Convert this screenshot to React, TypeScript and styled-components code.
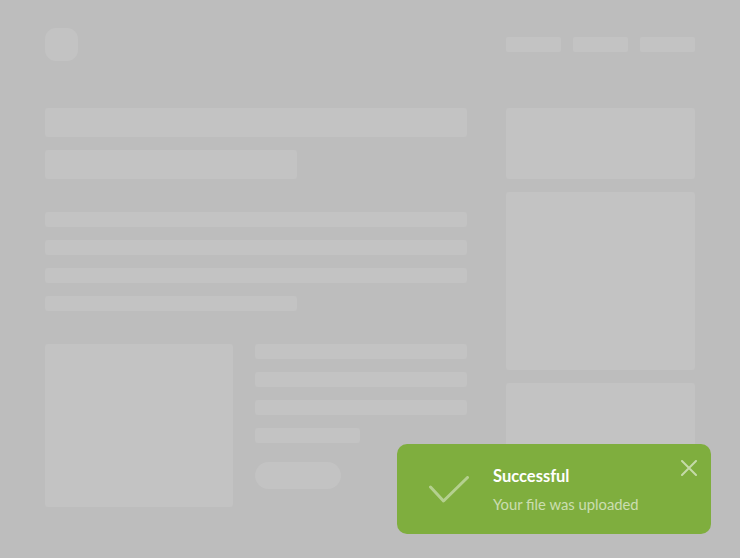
import React from "react";
import styled, { createGlobalStyle } from "styled-components";

const Global = createGlobalStyle`
  html, body { margin: 0; padding: 0; background: #bdbdbd; }
  body { font-family: Lato, "Open Sans", sans-serif; }
`;

const Page = styled.div`
  position: relative;
  width: 740px;
  height: 558px;
  box-sizing: border-box;
  padding: 27px 45px 0 45px;
  background: #bdbdbd;
  overflow: hidden;
`;

const Header = styled.header`
  display: flex;
  align-items: center;
  justify-content: space-between;
  height: 34px;
`;

const Logo = styled.div`
  width: 33px;
  height: 33px;
  border-radius: 11px;
  background: #c3c3c3;
`;

const Nav = styled.nav`
  display: flex;
  gap: 12px;
`;

const NavItem = styled.div`
  width: 55px;
  height: 15px;
  border-radius: 2px;
  background: #c3c3c3;
`;

const Body = styled.div`
  display: grid;
  grid-template-columns: 422px 189px;
  column-gap: 39px;
  margin-top: 47px;
`;

const Main = styled.div`
  display: flex;
  flex-direction: column;
`;

const Block = styled.div<{ $w?: number; $h: number; $mb?: number; $r?: number }>`
  width: ${(p) => (p.$w ? `${p.$w}px` : "100%")};
  height: ${(p) => p.$h}px;
  margin-bottom: ${(p) => p.$mb ?? 0}px;
  border-radius: ${(p) => p.$r ?? 3}px;
  background: #c3c3c3;
  flex-shrink: 0;
`;

const Lines = styled.div`
  display: flex;
  flex-direction: column;
  gap: 13px;
`;

const Bottom = styled.div`
  display: flex;
  gap: 22px;
  margin-top: 33px;
`;

const BottomText = styled.div`
  flex: 1;
  display: flex;
  flex-direction: column;
`;

const Side = styled.aside`
  display: flex;
  flex-direction: column;
  gap: 13px;
`;

const Toast = styled.div`
  position: absolute;
  left: 397px;
  top: 444px;
  width: 314px;
  height: 90px;
  box-sizing: border-box;
  padding-left: 32px;
  border-radius: 10px;
  background: #7fae3e;
  display: flex;
  align-items: center;
  gap: 24px;
`;

const CheckIcon = styled.svg`
  width: 40px;
  height: 28px;
  flex-shrink: 0;
  margin-top: 2px;
`;

const ToastText = styled.div`
  display: flex;
  flex-direction: column;
  gap: 8px;
  margin-top: 2px;
`;

const ToastTitle = styled.div`
  font-family: Lato, "Open Sans", sans-serif;
  font-weight: 700;
  font-size: 16.5px;
  line-height: 20px;
  color: #ffffff;
`;

const ToastMessage = styled.div`
  font-family: Lato, "Open Sans", sans-serif;
  font-weight: 400;
  font-size: 14.8px;
  line-height: 20px;
  color: rgba(255, 255, 255, 0.6);
`;

const CloseButton = styled.button`
  position: absolute;
  top: 15px;
  right: 13px;
  width: 18px;
  height: 18px;
  padding: 0;
  border: 0;
  background: transparent;
  display: flex;
  align-items: center;
  justify-content: center;
  cursor: pointer;
`;

export default function App() {
  return (
    <>
      <Global />
      <Page>
        <Header>
          <Logo />
          <Nav>
            <NavItem />
            <NavItem />
            <NavItem />
          </Nav>
        </Header>
        <Body>
          <Main>
            <Block $h={29} $mb={13} />
            <Block $w={252} $h={29} $mb={33} />
            <Lines>
              <Block $h={15} />
              <Block $h={15} />
              <Block $h={15} />
              <Block $w={252} $h={15} />
            </Lines>
            <Bottom>
              <Block $w={188} $h={163} />
              <BottomText>
                <Lines>
                  <Block $h={15} />
                  <Block $h={15} />
                  <Block $h={15} />
                  <Block $w={105} $h={15} />
                </Lines>
                <Block $w={86} $h={27} $r={13.5} style={{ marginTop: 19 }} />
              </BottomText>
            </Bottom>
          </Main>
          <Side>
            <Block $h={71} />
            <Block $h={178} />
            <Block $h={124} />
          </Side>
        </Body>
        <Toast role="status">
          <CheckIcon viewBox="0 0 40 28" fill="none">
            <path
              d="M1.5 11 L14.5 25 L38.5 1.5"
              stroke="rgba(255,255,255,0.42)"
              strokeWidth="3"
              strokeLinecap="round"
              strokeLinejoin="round"
            />
          </CheckIcon>
          <ToastText>
            <ToastTitle>Successful</ToastTitle>
            <ToastMessage>Your file was uploaded</ToastMessage>
          </ToastText>
          <CloseButton aria-label="Close">
            <svg width="16" height="16" viewBox="0 0 16 16" fill="none">
              <path
                d="M1 1 L15 15 M15 1 L1 15"
                stroke="rgba(255,255,255,0.55)"
                strokeWidth="2"
                strokeLinecap="round"
              />
            </svg>
          </CloseButton>
        </Toast>
      </Page>
    </>
  );
}
